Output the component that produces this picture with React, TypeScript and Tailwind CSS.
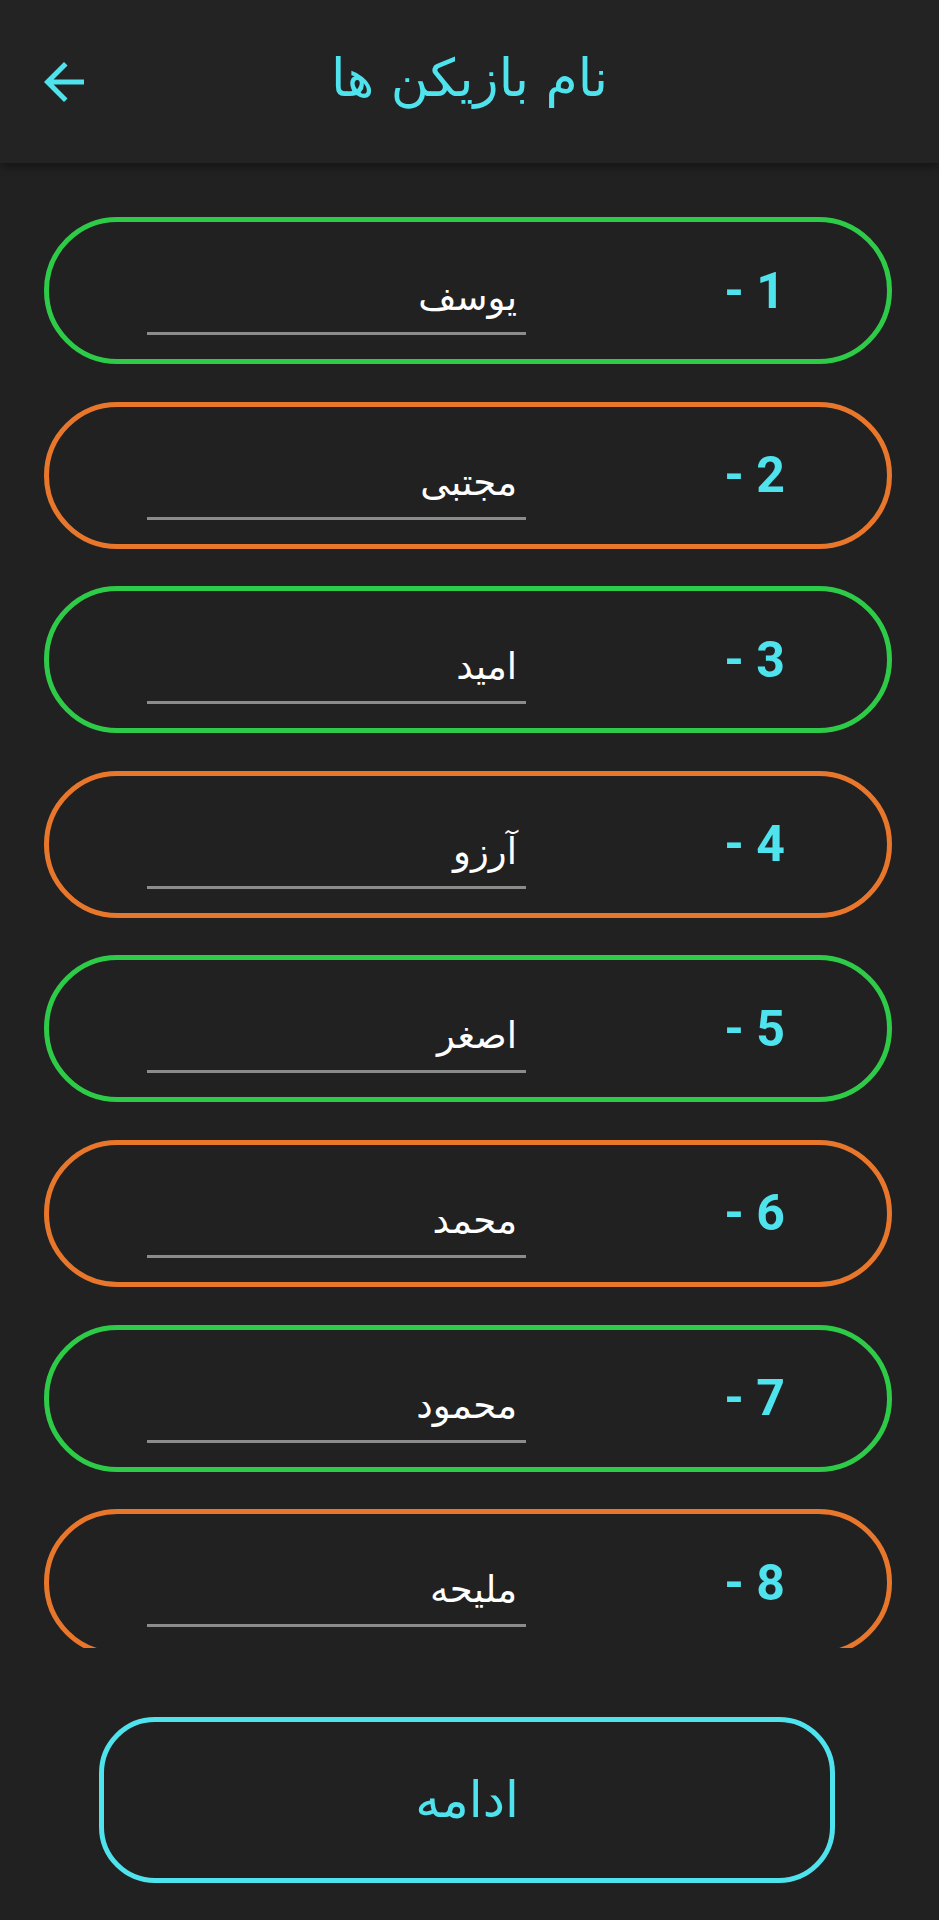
import React from "react";

const players = ["یوسف", "مجتبی", "امید", "آرزو", "اصغر", "محمد", "محمود", "ملیحه"];

function BackArrow() {
  return (
    <svg viewBox="0 0 24 24" className="w-[60px] h-[60px]" fill="#4fe3ee">
      <path d="M20 11H7.83l5.59-5.59L12 4l-8 8 8 8 1.41-1.41L7.83 13H20v-2z" />
    </svg>
  );
}

function PlayerRow({ index, name }: { index: number; name: string }) {
  const even = index % 2 === 1;
  return (
    <div
      className={
        "h-[147px] shrink-0 ml-[44px] mr-[47px] rounded-full border-[5px] flex items-start pl-[98px] pr-[102px] " +
        (even ? "border-[#e8772c]" : "border-[#2ecb48]")
      }
    >
      <div className="w-[379px] mt-[50px] pb-[4px] border-b-[3px] border-[#8c8c8c]">
        <div dir="rtl" className="h-[56px] leading-[52px] pr-[9px] text-white text-[37px] font-['DejaVu_Sans',sans-serif]">
          {name}
        </div>
      </div>
      <div className="flex-1" />
      <div dir="ltr" className="self-center text-[#4fe3ee] text-[50px] font-bold font-['Roboto',sans-serif] leading-none">
        - {index + 1}
      </div>
    </div>
  );
}

export default function App() {
  return (
    <div className="w-[939px] h-[1920px] bg-[#212121] flex flex-col overflow-hidden">
      <header className="h-[163px] shrink-0 bg-[#232323] shadow-[0_4px_8px_rgba(0,0,0,0.35)] grid grid-cols-[1fr_auto_1fr] items-center relative z-10">
        <div className="pl-[34px]">
          <BackArrow />
        </div>
        <h1 dir="rtl" className="text-[#4fe3ee] text-[52px] font-['DejaVu_Sans',sans-serif] leading-none pb-[8px]">
          نام بازیکن ها
        </h1>
        <div />
      </header>

      <div className="h-[1485px] shrink-0 overflow-hidden pt-[54px] flex flex-col gap-[37.6px]">
        {players.map((p, i) => (
          <PlayerRow key={i} index={i} name={p} />
        ))}
      </div>

      <div className="pt-[69px] pl-[99px] pr-[104px]">
        <button className="w-full h-[166px] rounded-[56px] border-[5px] border-[#4fe3ee] flex items-center justify-center">
          <span dir="rtl" className="text-[#4fe3ee] text-[50px] font-['DejaVu_Sans',sans-serif]">
            ادامه
          </span>
        </button>
      </div>
    </div>
  );
}
